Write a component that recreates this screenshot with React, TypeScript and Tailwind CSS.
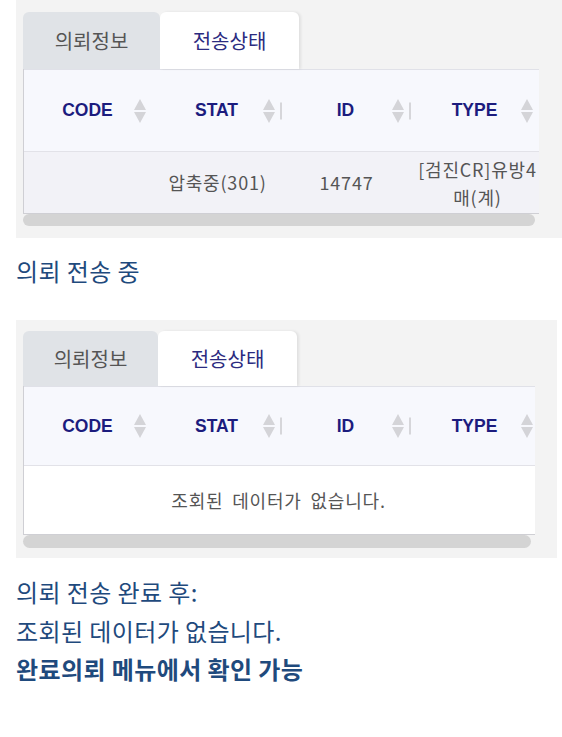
import React from "react";

const SortIcon = () => (
  <svg width="12" height="24" viewBox="0 0 12 24" className="absolute right-[7px] top-1/2 -translate-y-1/2">
    <polygon points="6,0 12,11 0,11" fill="#d4d4d8" />
    <polygon points="0,13 12,13 6,24" fill="#d4d4d8" />
  </svg>
);

const Sep = () => <div className="absolute right-0 top-1/2 -translate-y-1/2 h-[17px] w-[2px] bg-[#d6d6da]" />;

const cols = [
  { label: "CODE", sep: false },
  { label: "STAT", sep: true },
  { label: "ID", sep: true },
  { label: "TYPE", sep: false },
];

function Header({ h }: { h: string }) {
  return (
    <div className={`flex bg-[#f7f8fd] border-t border-[#e0e1e8] ${h}`}>
      {cols.map((c) => (
        <div key={c.label} className="relative w-[129px] shrink-0 flex items-center justify-center">
          <span className="font-bold text-[17.5px] text-[#1c1c7e] pr-[2px]" style={{ fontFamily: '"Liberation Sans", Arial, sans-serif' }}>
            {c.label}
          </span>
          <SortIcon />
          {c.sep && <Sep />}
        </div>
      ))}
    </div>
  );
}

function Tabs({ h, w1, w2 }: { h: string; w1: string; w2: string }) {
  return (
    <div className={`flex ${h}`}>
      <div className={`${w1} bg-[#e0e3e7] rounded-t-[6px] flex items-center justify-center text-[20px] text-[#555555]`}>의뢰정보</div>
      <div className={`${w2} bg-white rounded-t-[6px] shadow-[2px_0_3px_rgba(0,0,0,0.08)] flex items-center justify-center text-[20px] text-[#2b2b80]`}>전송상태</div>
    </div>
  );
}

export default function App() {
  const kr = { fontFamily: '"Noto Sans CJK KR", "Noto Sans", sans-serif' };
  return (
    <div className="w-[562px] h-[737px] bg-white flex flex-col" style={kr}>
      {/* Panel 1 */}
      <div className="ml-[16px] w-[546px] h-[238px] bg-[#f3f3f3] pt-[12px] pl-[7px] overflow-hidden">
        <Tabs h="h-[57px]" w1="w-[137px]" w2="w-[139px]" />
        <div className="w-[516px] border-l border-[#cfcfd4] overflow-hidden">
          <Header h="h-[82px]" />
          <div className="flex h-[63px] bg-[#f2f2f7] border-t border-[#e2e2e8] border-b border-b-[#cfcfd4] text-[18px] tracking-[0.8px] text-[#555555]">
            <div className="w-[129px] shrink-0" />
            <div className="w-[129px] shrink-0 flex items-center justify-center">압축중(301)</div>
            <div className="w-[129px] shrink-0 flex items-center justify-center">14747</div>
            <div className="w-[129px] shrink-0 flex flex-col items-center justify-center leading-[28px] pl-[4px] whitespace-nowrap">
              <span>[검진CR]유방4</span>
              <span>매(계)</span>
            </div>
          </div>
        </div>
        <div className="w-[512px] h-[12px] rounded-full bg-[#d4d4d4]" />
      </div>

      {/* Caption 1 */}
      <div className="h-[82px] pt-[17px] pl-[16px] text-[24px] tracking-[0.4px] leading-[32px] text-[#1f4a7d]">의뢰 전송 중</div>

      {/* Panel 2 */}
      <div className="ml-[16px] w-[541px] h-[238px] bg-[#f3f3f3] pt-[11px] pl-[7px] overflow-hidden">
        <Tabs h="h-[55px]" w1="w-[135px]" w2="w-[139px]" />
        <div className="w-[512px] border-l border-[#cfcfd4] overflow-hidden">
          <div className="w-[516px] -mr-[4px]">
            <Header h="h-[79px]" />
          </div>
          <div className="h-[70px] bg-white border-t border-[#e2e2e8] border-b border-b-[#cfcfd4] flex items-center justify-center text-[18px] tracking-[0.8px] [word-spacing:4px] text-[#555555] pr-[2px]">
            조회된 데이터가 없습니다.
          </div>
        </div>
        <div className="w-[508px] h-[13px] rounded-full bg-[#d4d4d4]" />
      </div>

      {/* Captions 2 */}
      <div className="pt-[15px] pl-[16px] text-[24px] tracking-[0.4px] leading-[38.5px] text-[#1f4a7d]">
        <div>의뢰 전송 완료 후:</div>
        <div>조회된 데이터가 없습니다.</div>
        <div className="font-bold">완료의뢰 메뉴에서 확인 가능</div>
      </div>
    </div>
  );
}
